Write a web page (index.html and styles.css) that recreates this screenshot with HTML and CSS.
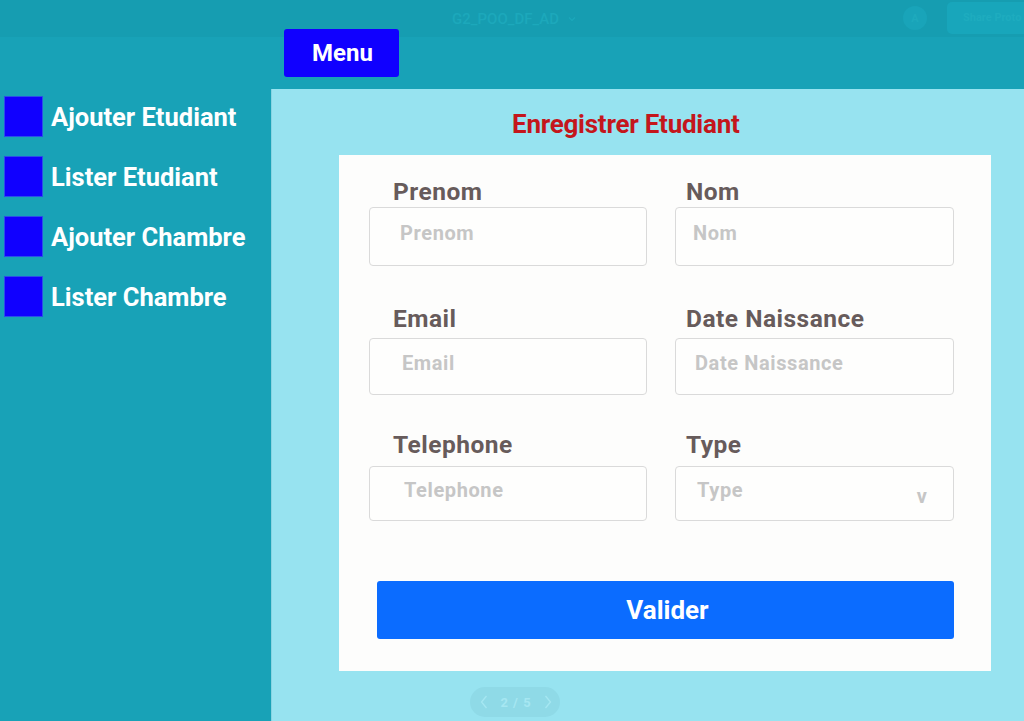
FILE: index.html
```html
<!DOCTYPE html>
<html lang="fr">
<head>
<meta charset="utf-8">
<title>G2_POO_DF_AD</title>
<link rel="stylesheet" href="styles.css">
</head>
<body>
<div class="topbar">
  <div class="doc-title">G2_POO_DF_AD <svg class="caret" width="8" height="6" viewBox="0 0 8 6"><path d="M1 1.5 L4 4.5 L7 1.5" fill="none" stroke="currentColor" stroke-width="1.2"/></svg></div>
  <div class="top-actions">
    <div class="avatar">A</div>
    <div class="share">Share Proto</div>
  </div>
</div>
<div class="app">
  <div class="header-left"></div>
  <div class="header">
    <button class="menu-btn">Menu</button>
  </div>
  <nav class="sidebar">
    <div class="nav-item"><span class="nav-square"></span><span class="nav-label">Ajouter Etudiant</span></div>
    <div class="nav-item"><span class="nav-square"></span><span class="nav-label">Lister Etudiant</span></div>
    <div class="nav-item"><span class="nav-square"></span><span class="nav-label">Ajouter Chambre</span></div>
    <div class="nav-item"><span class="nav-square"></span><span class="nav-label">Lister Chambre</span></div>
  </nav>
  <main class="panel">
    <h1 class="title">Enregistrer Etudiant</h1>
    <form class="card">
      <div class="row row-1">
        <div class="field col-a"><label class="label">Prenom</label><div class="input"><span class="ph">Prenom</span></div></div>
        <div class="field col-b"><label class="label">Nom</label><div class="input"><span class="ph">Nom</span></div></div>
      </div>
      <div class="row row-2">
        <div class="field col-a"><label class="label">Email</label><div class="input"><span class="ph">Email</span></div></div>
        <div class="field col-b"><label class="label">Date Naissance</label><div class="input"><span class="ph">Date Naissance</span></div></div>
      </div>
      <div class="row row-3">
        <div class="field col-a"><label class="label">Telephone</label><div class="input"><span class="ph">Telephone</span></div></div>
        <div class="field col-b"><label class="label">Type</label><div class="input select"><span class="ph">Type</span><span class="arrow">v</span></div></div>
      </div>
      <button type="button" class="submit">Valider</button>
    </form>
    <div class="pager">
      <svg width="8" height="14" viewBox="0 0 8 14"><path d="M6.5 1 L1.5 7 L6.5 13" fill="none" stroke="currentColor" stroke-width="1.3"/></svg>
      <span class="pager-text">2 / 5</span>
      <svg width="8" height="14" viewBox="0 0 8 14"><path d="M1.5 1 L6.5 7 L1.5 13" fill="none" stroke="currentColor" stroke-width="1.3"/></svg>
    </div>
  </main>
</div>
</body>
</html>
```

FILE: styles.css
```css
* { box-sizing: border-box; }
html, body { margin: 0; padding: 0; }
body {
  width: 1024px;
  height: 721px;
  overflow: hidden;
  background: #18a2b7;
  font-family: Roboto, "Noto Sans", sans-serif;
}

.topbar {
  height: 37px;
  background: #169db1;
  display: flex;
  align-items: center;
  justify-content: center;
  position: relative;
}
.doc-title {
  color: #1ca8bb;
  font-size: 15px;
  font-weight: 500;
  display: flex;
  align-items: center;
  gap: 9px;
  margin-left: 4px;
}
.caret { color: #1ca8bb; }
.top-actions {
  position: absolute;
  right: 0;
  top: 2px;
  display: flex;
  align-items: center;
  gap: 20px;
}
.avatar {
  width: 24px;
  height: 24px;
  border-radius: 50%;
  background: #19a4b9;
  color: #1eaabd;
  font-size: 11px;
  font-weight: 700;
  display: flex;
  align-items: center;
  justify-content: center;
}
.share {
  width: 77px;
  height: 32px;
  border-radius: 5px 0 0 5px;
  background: #18a6bb;
  color: #1eacbf;
  font-size: 11px;
  font-weight: 700;
  padding: 9px 0 0 16px;
  white-space: nowrap;
}

.app {
  display: grid;
  grid-template-columns: 271px 1fr;
  grid-template-rows: 52px 632px;
}
.header {
  padding-left: 13px;
}
.menu-btn {
  position: relative;
  z-index: 2;
  margin-top: -8px;
  width: 115px;
  height: 48px;
  border: none;
  border-radius: 3px;
  background: #1000ff;
  color: #fff;
  font-family: Roboto, sans-serif;
  font-size: 24px;
  font-weight: 700;
  padding: 0 0 0 2px;
}

.sidebar {
  padding: 7px 0 0 4px;
  display: flex;
  flex-direction: column;
  gap: 19px;
}
.nav-item {
  display: flex;
  align-items: center;
  gap: 8px;
  height: 41px;
}
.nav-square {
  width: 39px;
  height: 41px;
  background: #1000ff;
  border: 1px solid #2a4fe8;
  flex: none;
}
.nav-label {
  color: #fff;
  font-size: 25.5px;
  font-weight: 700;
  white-space: nowrap;
}

.panel {
  background: #97e3f0;
  border-left: 1px solid #86d4e2;
  padding-left: 67px;
}
.title {
  margin: 0;
  padding: 18px 0 0 173px;
  height: 66px;
  color: #c4161c;
  font-size: 26px;
  font-weight: 700;
  letter-spacing: -0.25px;
  line-height: 34px;
}
.card {
  width: 652px;
  height: 516px;
  background: #fdfdfc;
  padding: 23px 37px 0 30px;
  margin: 0;
}
.row {
  display: grid;
  grid-template-columns: 278px 279px;
  column-gap: 28px;
}
.row-2 { margin-top: 39px; }
.row-3 { margin-top: 36px; }
.field { display: flex; flex-direction: column; }
.label {
  color: #675b5b;
  font-size: 24.5px;
  font-weight: 700;
  letter-spacing: 0.5px;
  line-height: 28px;
  height: 28px;
  white-space: nowrap;
}
.col-a .label { padding-left: 24px; }
.col-b .label { padding-left: 11px; }
.row-1 .label { margin-bottom: 1px; }
.row-2 .label { margin-bottom: 5px; }
.row-3 .label { margin-bottom: 7px; }
.input {
  border: 1px solid #dadada;
  border-radius: 4px;
  background: #fefefd;
  display: flex;
  align-items: center;
  padding-bottom: 7px;
}
.row-1 .input { height: 59px; }
.row-2 .input { height: 57px; }
.row-3 .input { height: 55px; }
.ph {
  color: #c6c6c6;
  font-size: 20px;
  font-weight: 700;
  letter-spacing: 0.6px;
}
.col-a .ph { padding-left: 30px; }
.row-2 .col-a .ph { padding-left: 32px; }
.row-3 .col-a .ph { padding-left: 34px; }
.col-b .ph { padding-left: 17px; }
.row-2 .col-b .ph { padding-left: 19px; }
.row-3 .col-b .ph { padding-left: 21px; }
.select { justify-content: space-between; }
.arrow {
  color: #c6c6c6;
  font-size: 20px;
  font-weight: 700;
  padding-right: 26px;
  margin-top: 12px;
}
.submit {
  display: block;
  margin: 60px 0 0 8px;
  width: 577px;
  height: 58px;
  border: none;
  border-radius: 3px;
  background: #0b6cff;
  color: #fff;
  font-family: Roboto, sans-serif;
  font-size: 26px;
  font-weight: 700;
  padding: 0 0 0 4px;
}

.pager {
  margin: 16px 0 0 131px;
  width: 90px;
  height: 30px;
  border-radius: 15px;
  background: #8fdae7;
  color: #a6e7f2;
  display: flex;
  align-items: center;
  justify-content: space-between;
  padding: 0 8px 0 10px;
}
.pager-text {
  font-size: 13px;
  font-weight: 700;
  letter-spacing: 1px;
}
```
